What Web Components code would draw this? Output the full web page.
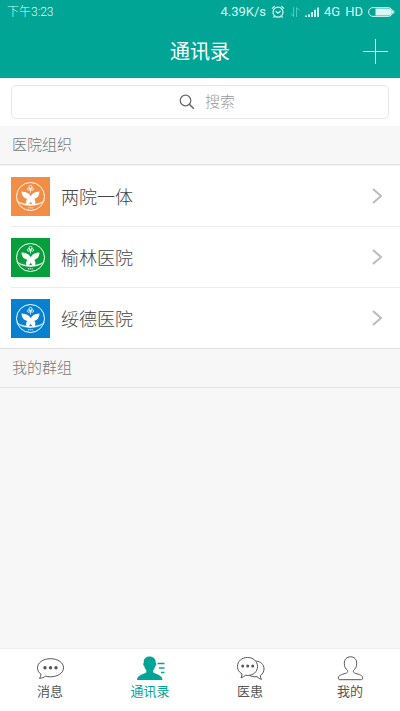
<!DOCTYPE html>
<html lang="zh-CN">
<head>
<meta charset="utf-8">
<meta name="viewport" content="width=device-width, initial-scale=1">
<title>通讯录</title>
<style>
  body {
    margin: 0;
    background: #f7f7f7;
    color: #555;
    font-family: Roboto, "Noto Sans CJK SC", sans-serif;
    --teal: #00a595;
  }
</style>
</head>
<body>
<contacts-app>
  <status-bar slot="top" time="下午3:23" speed="4.39K/s"></status-bar>
  <title-bar slot="top">通讯录</title-bar>
  <search-box slot="top" label="搜索"></search-box>

  <contact-section label="医院组织">
    <contact-row color="#f18d45">两院一体</contact-row>
    <contact-row color="#05a03c">榆林医院</contact-row>
    <contact-row color="#0780d0">绥德医院</contact-row>
  </contact-section>
  <contact-section label="我的群组"></contact-section>

  <tab-bar slot="bottom">
    <tab-item icon="message">消息</tab-item>
    <tab-item icon="contacts" active>通讯录</tab-item>
    <tab-item icon="chats">医患</tab-item>
    <tab-item icon="me">我的</tab-item>
  </tab-bar>
</contacts-app>

<script>
class BaseElement extends HTMLElement {
  constructor() {
    super();
    this.attachShadow({ mode: "open" });
  }

  connectedCallback() {
    this.shadowRoot.innerHTML = this.render();
  }
}

class ContactsApp extends BaseElement {
  render() {
    return `
      <style>
        :host { display: flex; flex-direction: column; min-height: 100vh; }
        main { flex: 1; }
      </style>
      <header><slot name="top"></slot></header>
      <main><slot></slot></main>
      <slot name="bottom"></slot>
    `;
  }
}

class StatusBar extends BaseElement {
  render() {
    return `
      <style>
        :host {
          display: flex;
          align-items: center;
          justify-content: space-between;
          height: 24px;
          padding: 0 5px 0 7px;
          background: var(--teal);
          color: #d9f8f3;
          font-size: 12px;
          font-weight: 300;
          line-height: 24px;
        }
        .right { display: flex; align-items: center; gap: 5px; font-size: 13px; font-weight: 400; }
        svg { display: block; fill: none; stroke: currentColor; }
      </style>
      <span>${this.getAttribute("time")}</span>
      <div class="right">
        <span>${this.getAttribute("speed")}</span>
        <svg width="14" height="14" viewBox="0 0 14 14" stroke-width="1.2">
          <circle cx="7" cy="7.2" r="5" />
          <path d="M1 3.6 3.6 1.2M13 3.6 10.4 1.2M4.6 6.2 7 8.3 9.6 6M3.4 11.3 2.4 12.6M10.6 11.3l1 1.3" />
        </svg>
        <svg width="10" height="12" viewBox="0 0 10 12" opacity=".4">
          <path d="M3.5 1v9.5L.8 7.8M6.5 11V1.5l2.7 2.7" />
        </svg>
        <svg width="14" height="10" viewBox="0 0 14 10" stroke-width="1.8">
          <path d="M1 10V8.600M4 10V7.200M7 10V5M10 10V2.800M13 10V.6" />
        </svg>
        <span>4G</span>
        <span>HD</span>
        <svg width="27" height="12" viewBox="0 0 27 12">
          <rect x=".6" y="1.600" width="24" height="8.800" rx="4.400" />
          <path d="M25.800 4.400v3.200" />
          <path d="M7.500 2.600h13a3.400 3.400 0 0 1 0 6.800h-13z" fill="currentColor" stroke="none" />
        </svg>
      </div>
    `;
  }
}

class TitleBar extends BaseElement {
  render() {
    return `
      <style>
        :host {
          display: grid;
          grid-template-columns: 1fr auto 1fr;
          align-items: center;
          padding: 14px 12px 12px;
          background: var(--teal);
          color: #fff;
        }
        h1 { grid-column: 2; margin: 0; font-size: 20px; font-weight: 400; line-height: 28px; }
        button { justify-self: end; padding: 0; border: 0; background: none; color: inherit; }
        svg { display: block; }
      </style>
      <h1><slot></slot></h1>
      <button type="button" aria-label="添加">
        <svg width="26" height="26" viewBox="0 0 26 26" fill="none" stroke="currentColor">
          <path d="M13.500 0v25M1 12.500h25" />
        </svg>
      </button>
    `;
  }
}

class SearchBox extends BaseElement {
  render() {
    const label = this.getAttribute("label");
    return `
      <style>
        :host { display: block; padding: 7px 11px; background: #fff; }
        label {
          display: flex;
          align-items: center;
          justify-content: center;
          gap: 10px;
          height: 32px;
          padding-left: 14px;
          border: 1px solid #e6e6e6;
          border-radius: 5px;
        }
        input {
          width: 30px;
          field-sizing: content;
          padding: 0 0 2px;
          border: 0;
          outline: 0;
          background: none;
          color: #555;
          font: 300 15px/24px "Noto Sans CJK SC", sans-serif;
        }
        input::placeholder { color: #999; opacity: 1; }
      </style>
      <label>
        <svg width="16" height="16" viewBox="0 0 16 16" fill="none" stroke="#666" stroke-width="1.2">
          <circle cx="6.500" cy="6.500" r="5.300" />
          <path d="m10.300 10.300 4.500 4.500" stroke-width="1.6" />
        </svg>
        <input type="text" placeholder="${label}" aria-label="${label}">
      </label>
    `;
  }
}

class ContactSection extends BaseElement {
  render() {
    return `
      <style>
        :host { display: block; }
        h2 {
          margin: 0;
          padding: 7px 12px;
          border-bottom: 1px solid #e4e4e4;
          color: #777;
          font-size: 15px;
          font-weight: 300;
          line-height: 24px;
        }
        .rows { background: #fff; }
        ::slotted(:first-child) { border-top: 1px solid #f0f0f0; }
        ::slotted(:last-child) { --inset: 0px; --line: #ddd; }
      </style>
      <h2>${this.getAttribute("label")}</h2>
      <div class="rows"><slot></slot></div>
    `;
  }
}

class ContactRow extends BaseElement {
  render() {
    return `
      <style>
        :host { display: block; }
        a {
          display: flex;
          align-items: center;
          gap: 11px;
          height: 60px;
          padding: 0 17px 0 11px;
          color: #444;
          font-size: 18px;
          font-weight: 300;
          text-decoration: none;
        }
        .line { height: 1px; margin-left: var(--inset, 11px); background: var(--line, #ececec); }
        .name { flex: 1; }
        svg { display: block; }
      </style>
      <a href="#">
        <svg width="39" height="39" viewBox="0 0 39 39" fill="none" stroke="#fff">
          <rect width="39" height="39" fill="${this.getAttribute("color")}" stroke="none" />
          <circle cx="19.500" cy="19.500" r="14" />
          <path d="M5.500 23C11 28.800 28 28.800 33.500 23 29 30.500 10 30.500 5.500 23z" fill="#fff" stroke-width=".3" />
          <path d="M10.500 14.500c4.500.2 7.800 1.800 9.200 4.800 1.400-3 4.300-4.600 8.800-4.800-.2 4.500-2.300 6.700-5.200 7.200 1.400 1.900 1.500 4 .2 6.300-1.900-.3-3.200-1.700-3.800-3.500-.6 1.800-1.900 3.200-3.800 3.500-1.300-2.300-1-4.400.3-6.300-3.200-.5-5.500-2.700-5.700-7.200z" fill="#fff" stroke="none" />
          <circle cx="19.500" cy="9.800" r="1.500" stroke-width=".8" />
          <circle cx="17.800" cy="12" r="1.300" stroke-width=".8" />
          <circle cx="21.200" cy="12" r="1.300" stroke-width=".8" />
          <path d="M19.500 11.500v4" stroke-width=".8" />
          <path d="M17 30.800h5" stroke-dasharray="1.200 .6" />
        </svg>
        <span class="name"><slot></slot></span>
        <svg width="12" height="18" viewBox="0 0 12 18" fill="none" stroke="#bbb" stroke-width="2">
          <path d="m2 2 8 7-8 7" />
        </svg>
      </a>
      <div class="line"></div>
    `;
  }
}

class TabBar extends BaseElement {
  render() {
    return `
      <style>
        :host { display: block; border-top: 1px solid #eee; background: #fff; }
        nav { display: grid; grid-template-columns: repeat(4, 1fr); }
      </style>
      <nav><slot></slot></nav>
    `;
  }
}

const tabIcons = {
  message: `
    <path d="M5 18.200C2.600 16.600 1.500 14.300 1.500 11.800 1.500 6.700 7 2.700 14.500 2.700S27.500 6.700 27.500 11.800 22 20.800 14.500 20.800c-2 0-3.500-.2-5-.6-1.600 1.200-3.400 1.800-6 2.200.9-1.300 1.400-2.600 1.500-4.200z" />
    <g fill="currentColor" stroke="none">
      <circle cx="9" cy="11.800" r="1.700" /><circle cx="14.500" cy="11.800" r="1.700" /><circle cx="20" cy="11.800" r="1.700" />
    </g>`,
  contacts: `
    <path d="M13.500.5c4 0 6.300 2.300 6.200 6.200 1 .8.700 2.800-.5 3.600-.4 1.800-1 2.900-2 3.900v2.300c2.800 1.600 9.300 2.600 9.300 7.500H1c0-4.900 6.700-5.900 9.300-7.500v-2.300c-1-1-1.700-2.100-2-3.900-1.200-.8-1.500-2.800-.5-3.600C7.500 2.800 9.700.5 13.500.5z" fill="currentColor" stroke="none" />
    <path d="M21.500 7.500H28.500M23 12h5.500M25 16.500h3.500" stroke-width="1.500" />`,
  chats: `
    <path d="M6 18C3 16.200 1.500 13.600 1.500 10.500c0-5.300 4.300-9 10-9s10 3.700 10 9-4.300 9-10 9c-.8 0-1.500-.1-2.200-.2-1.300 1.200-2.700 2-4.300 2.600.6-1.300 1-2.500 1-3.900zM20.300 5c4.300.5 7.700 3.500 7.700 7.800 0 2.900-1.300 5.200-3.600 6.700 0 1.500.3 2.700 1.100 3.900-1.700-.5-3.200-1.400-4.500-2.700-3 .3-5.500-.2-7.500-1.400" />
    <g fill="currentColor" stroke="none">
      <circle cx="6.700" cy="10" r="1.500" /><circle cx="11.700" cy="10" r="1.500" /><circle cx="16.700" cy="10" r="1.500" />
    </g>`,
  me: `
    <path d="M14.500.8c4 0 6.200 2.700 6.200 6.500 0 3.300-1.200 5.500-3.300 7.200-.3 1.600.3 2.400 2 2.900 4.200 1.200 7.300 1.900 7.300 4.600 0 1.300-.6 1.700-1.800 1.700H4.100c-1.200 0-1.800-.4-1.800-1.700 0-2.700 3.100-3.400 7.300-4.600 1.700-.5 2.300-1.300 2-2.900-2.100-1.700-3.300-3.900-3.300-7.200 0-3.800 2.200-6.500 6.200-6.500z" />`,
};

class TabItem extends BaseElement {
  render() {
    const active = this.hasAttribute("active");
    return `
      <style>
        :host { display: block; color: #555; }
        :host([active]) { color: var(--teal); }
        a {
          display: flex;
          flex-direction: column;
          align-items: center;
          gap: 1px;
          padding: 7px 0 9px;
          color: inherit;
          font-size: 13px;
          line-height: 20px;
          text-decoration: none;
        }
        svg { display: block; }
      </style>
      <a href="#" ${active ? 'aria-current="page"' : ""}>
        <svg width="29" height="25" viewBox="0 0 29 25" fill="none" stroke="currentColor" stroke-width="1">
          ${tabIcons[this.getAttribute("icon")]}
        </svg>
        <span><slot></slot></span>
      </a>
    `;
  }
}

customElements.define("contacts-app", ContactsApp);
customElements.define("status-bar", StatusBar);
customElements.define("title-bar", TitleBar);
customElements.define("search-box", SearchBox);
customElements.define("contact-section", ContactSection);
customElements.define("contact-row", ContactRow);
customElements.define("tab-bar", TabBar);
customElements.define("tab-item", TabItem);
</script>
</body>
</html>
